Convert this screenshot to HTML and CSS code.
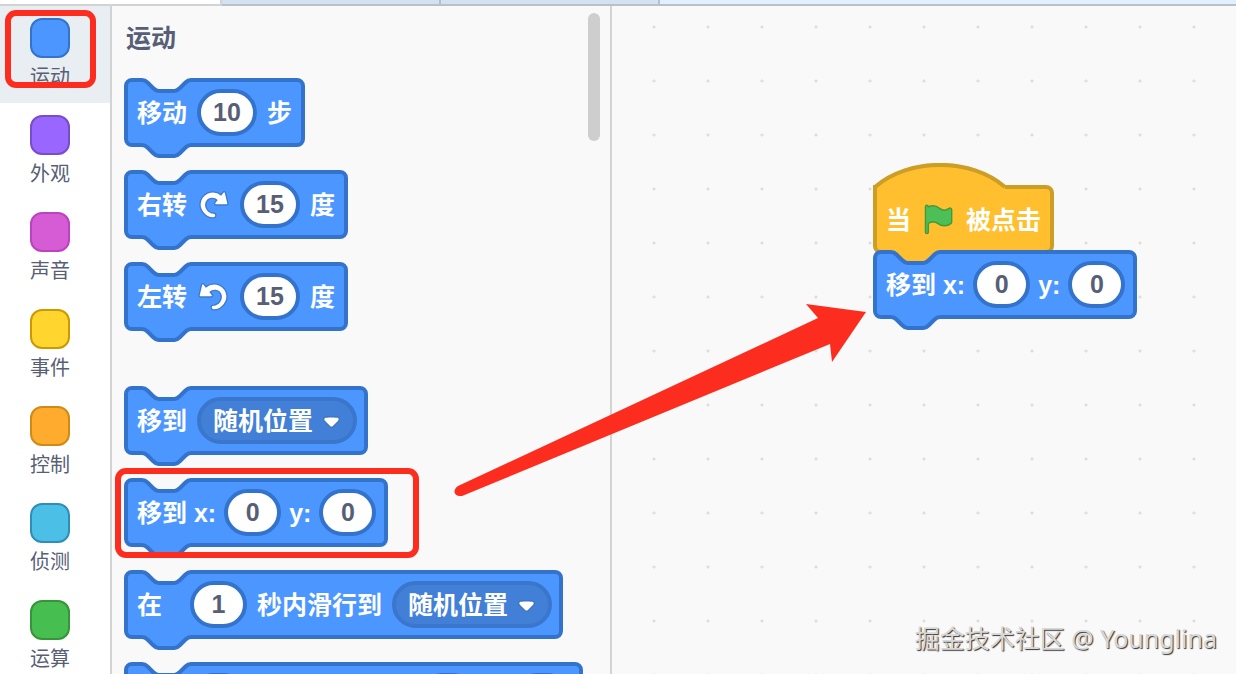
FILE: index.html
```html
<!DOCTYPE html>
<html lang="zh-CN">
<head>
    <meta charset="UTF-8">
    <meta name="viewport" content="width=device-width, initial-scale=1.0">
    <title>Scratch</title>
    <link rel="stylesheet" href="styles.css">
</head>
<body>
    <!-- shared shapes -->
    <svg class="defs" width="0" height="0" aria-hidden="true">
        <symbol id="notch" viewBox="0 0 53 15">
            <path class="notch-fill" d="M0 2h2c3 0 4 1 5.500 2.500l5.500 5.500c1.500 1.500 3 3 5.500 3h16c2.500 0 4-1.500 5.500-3l5.500-5.500c1.500-1.500 2.500-2.500 5.500-2.500h2V0H0z"/>
            <path class="notch-line" d="M0 2h2c3 0 4 1 5.500 2.500l5.500 5.500c1.500 1.500 3 3 5.500 3h16c2.500 0 4-1.500 5.500-3l5.500-5.500c1.500-1.500 2.500-2.500 5.500-2.500h2"/>
        </symbol>
        <symbol id="turn" viewBox="0 0 24 24">
            <path fill="#3d79cc" d="M22.68,12.2a1.6,1.6,0,0,1-1.27.63H13.72a1.59,1.59,0,0,1-1.16-2.58l1.12-1.41a4.82,4.82,0,0,0-3.14-.77,4.31,4.31,0,0,0-2,.8,4.25,4.25,0,0,0-1.34,1.73,5.06,5.06,0,0,0,.54,4.62A5.58,5.58,0,0,0,12,17.74h0a2.26,2.26,0,0,1-.16,4.52A10.25,10.25,0,0,1,3.74,18,10.14,10.14,0,0,1,2.25,8.78,9.7,9.7,0,0,1,5.08,4.64,9.92,9.92,0,0,1,9.66,2.5a10.66,10.66,0,0,1,7.72,1.68l1.08-1.35a1.57,1.57,0,0,1,1.24-.6,1.6,1.6,0,0,1,1.54,1.21l1.7,7.37A1.57,1.57,0,0,1,22.68,12.2Z"/>
            <path fill="#fff" d="M21.38,11.83H13.77a.59.59,0,0,1-.43-1l1.75-2.19a5.9,5.9,0,0,0-4.7-1.58,5.07,5.07,0,0,0-4.11,3.17A6,6,0,0,0,7,15.77a6.51,6.51,0,0,0,5,2.92,1.31,1.31,0,0,1-.08,2.62,9.3,9.3,0,0,1-7.35-3.82A9.16,9.16,0,0,1,3.17,9.12,8.51,8.51,0,0,1,5.71,5.4,8.76,8.76,0,0,1,9.82,3.48a9.71,9.71,0,0,1,7.75,2.07l1.67-2.1a.59.59,0,0,1,1,.21L22,11.08A.59.59,0,0,1,21.38,11.83Z"/>
        </symbol>
        <symbol id="arrow" viewBox="0 0 12.71 8.79">
            <path fill="#231f20" opacity=".1" d="M12.71 2.44A2.41 2.41 0 0 1 12 4.16L8.08 8.08a2.45 2.45 0 0 1-3.45 0L.72 4.16A2.42 2.42 0 0 1 0 2.44 2.48 2.48 0 0 1 .71.71C1 .47 1.43 0 6.36 0S11.75.46 12 .71a2.44 2.44 0 0 1 .71 1.73z"/>
            <path fill="#fff" d="M6.36 7.79a1.43 1.43 0 0 1-1-.42L1.42 3.45a1.44 1.44 0 0 1 0-2c.56-.56 9.31-.56 9.87 0a1.44 1.44 0 0 1 0 2L7.37 7.37a1.43 1.43 0 0 1-1.01.42z"/>
        </symbol>
    </svg>

    <div class="tabs">
        <div class="tab active"></div>
        <div class="tab"></div>
        <div class="tab"></div>
    </div>

    <main class="editor">
        <nav class="categories">
            <button type="button" class="category selected"><span class="bubble motion"></span>运动<span class="mark"></span></button>
            <button type="button" class="category"><span class="bubble looks"></span>外观</button>
            <button type="button" class="category"><span class="bubble sound"></span>声音</button>
            <button type="button" class="category"><span class="bubble events"></span>事件</button>
            <button type="button" class="category"><span class="bubble control"></span>控制</button>
            <button type="button" class="category"><span class="bubble sensing"></span>侦测</button>
            <button type="button" class="category"><span class="bubble operators"></span>运算</button>
        </nav>

        <section class="palette">
            <h2>运动</h2>
            <div class="block">
                <svg class="notch"><use href="#notch"/></svg>
                <span>移动</span>
                <input class="long" type="text" value="10" aria-label="步数">
                <span>步</span>
                <svg class="tail"><use href="#notch"/></svg>
            </div>
            <div class="block">
                <svg class="notch"><use href="#notch"/></svg>
                <span>右转</span>
                <svg class="icon"><use href="#turn"/></svg>
                <input class="long" type="text" value="15" aria-label="右转度数">
                <span>度</span>
                <svg class="tail"><use href="#notch"/></svg>
            </div>
            <div class="block group-end">
                <svg class="notch"><use href="#notch"/></svg>
                <span>左转</span>
                <svg class="icon flip"><use href="#turn"/></svg>
                <input class="long" type="text" value="15" aria-label="左转度数">
                <span>度</span>
                <svg class="tail"><use href="#notch"/></svg>
            </div>
            <div class="block ends-menu">
                <svg class="notch"><use href="#notch"/></svg>
                <span>移到</span>
                <span class="dropdown">
                    <select aria-label="移到"><option>随机位置</option></select>
                    <svg><use href="#arrow"/></svg>
                </span>
                <svg class="tail"><use href="#notch"/></svg>
            </div>
            <div class="block ends-field">
                <svg class="notch"><use href="#notch"/></svg>
                <span>移到 x:</span>
                <input type="text" value="0" aria-label="x">
                <span>y:</span>
                <input type="text" value="0" aria-label="y">
                <svg class="tail"><use href="#notch"/></svg>
                <span class="mark"></span>
            </div>
            <div class="block ends-menu">
                <svg class="notch"><use href="#notch"/></svg>
                <span class="first-word">在</span>
                <input type="text" value="1" aria-label="秒">
                <span>秒内滑行到</span>
                <span class="dropdown">
                    <select aria-label="滑行到"><option>随机位置</option></select>
                    <svg><use href="#arrow"/></svg>
                </span>
                <svg class="tail"><use href="#notch"/></svg>
            </div>
            <!-- below the fold, only the top edge shows -->
            <div class="block ends-field">
                <svg class="notch"><use href="#notch"/></svg>
                <span class="gap-first"></span>
                <input type="text" aria-label="秒">
                <span class="gap-words"></span>
                <input type="text" aria-label="滑行 x">
                <span class="gap-y"></span>
                <input type="text" aria-label="滑行 y">
            </div>
            <div class="scrollbar"></div>
        </section>

        <section class="workspace">
            <div class="stack">
                <div class="block hat">
                    <svg class="dome" viewBox="0 0 134 28">
                        <path class="notch-fill" d="M2 24c34-29.500 96-29.500 130 0v4H4z"/>
                        <path class="notch-line" d="M2 28v-4c34-29.500 96-29.500 130 0"/>
                    </svg>
                    <span>当</span>
                    <svg class="icon" viewBox="0 0 24 24">
                        <path fill="#4cbf56" stroke="#45993d" stroke-linejoin="round" d="M20.8 3.7c-.4-.2-.9-.1-1.200.2-2 1.600-4.800 1.600-6.800 0-2.300-1.900-5.600-2.300-8.300-1v-.4c0-.6-.5-1-1-1s-1 .4-1 1v18.800c0 .5.5 1 1 1h.1c.5 0 1-.5 1-1v-6.400c1-.7 2.100-1.200 3.400-1.300 1.200 0 2.400.4 3.400 1.200 2.900 2.300 7 2.300 9.800 0 .3-.2.4-.5.4-.9V4.700c0-.5-.3-.9-.8-1z"/>
                    </svg>
                    <span>被点击</span>
                </div>
                <div class="block ends-field attached">
                    <svg class="notch"><use href="#notch"/></svg>
                    <span>移到 x:</span>
                    <input type="text" value="0" aria-label="脚本 x">
                    <span>y:</span>
                    <input type="text" value="0" aria-label="脚本 y">
                    <svg class="tail"><use href="#notch"/></svg>
                </div>
            </div>
            <p class="credit">掘金技术社区 @ Younglina</p>
        </section>

        <svg class="pointer" viewBox="0 0 412 194" aria-hidden="true">
            <path fill="#fc2c1f" d="M412 9L352 1l12 14L4 183c-6 4-4 11 4 10L376 41l2 18z"/>
        </svg>
    </main>
</body>
</html>
```

FILE: styles.css
```css
* {
    box-sizing: border-box;
}

body {
    margin: 0;
    height: 100vh;
    display: flex;
    flex-direction: column;
    overflow: hidden;
    background: #f9f9f9;
    color: #575e75;
    font-family: "Liberation Sans", "Noto Sans CJK SC", sans-serif;
}

.defs {
    position: absolute;
}

/* tabs */
.tabs {
    display: flex;
    flex: none;
    height: 6px;
    background: #e0f1fd;
    border-bottom: 2px solid #b9bfcd;
}

.tab {
    width: 219px;
    background: #d2e3ef;
    border-right: 2px solid #b9bfcd;
}

.tab.active {
    width: 222px;
    height: 6px;
    background: #fff;
    border-bottom: 2px solid #d3d3d3;
    border-right-color: #d3d3d3;
}

.editor {
    position: relative;
    display: flex;
    flex: 1;
    min-height: 0;
}

/* category menu */
.categories {
    flex: none;
    width: 112px;
    background: #fff;
    border-right: 2px solid #d3d3d3;
}

.category {
    position: relative;
    display: flex;
    flex-direction: column;
    align-items: center;
    gap: 4px;
    width: 100%;
    height: 97px;
    padding: 12px 10px 0 0;
    border: none;
    background: none;
    color: #575e75;
    font: 20px/28px "Noto Sans CJK SC", sans-serif;
}

.category.selected {
    background: #e9eef2;
}

.bubble {
    width: 40px;
    height: 40px;
    border: 2px solid;
    border-radius: 12px;
}

.motion { background: #4c97ff; border-color: #3373cc; }
.looks { background: #9966ff; border-color: #774dcb; }
.sound { background: #d65cd6; border-color: #bd42bd; }
.events { background: #ffd52e; border-color: #cc9900; }
.control { background: #ffab2e; border-color: #cf8b17; }
.sensing { background: #4cbfe6; border-color: #2e8eb8; }
.operators { background: #46bf50; border-color: #389438; }

/* block list */
.palette {
    position: relative;
    display: flex;
    flex-direction: column;
    align-items: flex-start;
    gap: 23px;
    flex: none;
    width: 500px;
    padding: 14px 12px 0;
    border-right: 2px solid #d3d3d3;
    overflow: hidden;
}

.palette h2 {
    margin: 0 2px;
    height: 35px;
    font-size: 25px;
    line-height: 36px;
}

.scrollbar {
    position: absolute;
    top: 7px;
    right: 10px;
    width: 12px;
    height: 128px;
    border-radius: 6px;
    background: #cecece;
}

/* blocks */
.block {
    --fill: #4c97ff;
    --line: #3373cc;
    --behind: #f9f9f9;
    position: relative;
    display: flex;
    flex: none;
    align-items: center;
    gap: 10px;
    width: max-content;
    height: 69px;
    padding: 0 9px;
    border: 4px solid var(--line);
    border-radius: 8px;
    background: var(--fill);
    color: #fff;
    font-size: 25px;
    font-weight: bold;
    line-height: 36px;
}

.block.ends-field {
    gap: 8px;
    padding-right: 8px;
}

.block.ends-menu {
    padding-right: 7px;
}

.block.group-end {
    margin-bottom: 32px;
}

.notch,
.tail {
    position: absolute;
    left: 12px;
    width: 53px;
    height: 15px;
    fill: var(--behind);
}

.notch {
    top: -4px;
}

.tail {
    top: 61px;
    fill: var(--fill);
}

.notch-line {
    fill: none;
    stroke: var(--line);
    stroke-width: 4px;
}

.first-word {
    margin-right: 18px;
}

.gap-first {
    width: 45px;
}

.gap-words {
    width: 156px;
}

.gap-y {
    width: 22px;
}

.block input {
    width: 57px;
    height: 47px;
    padding: 0;
    border: 4px solid var(--line);
    border-radius: 24px;
    background: #fff;
    color: #575e75;
    font: inherit;
    text-align: center;
}

.block input.long {
    width: 60px;
}

.icon {
    width: 33px;
    height: 33px;
}

.flip {
    transform: scaleX(-1);
}

.dropdown {
    position: relative;
    height: 47px;
}

.dropdown select {
    appearance: none;
    width: 160px;
    height: 47px;
    padding: 0 12px;
    border: 4px solid #3a77cc;
    border-radius: 24px;
    background: #4280d7;
    color: #fff;
    font: inherit;
}

.dropdown svg {
    position: absolute;
    top: 19px;
    right: 17px;
    width: 17px;
    height: 12px;
    pointer-events: none;
}

/* script area */
.workspace {
    position: relative;
    flex: 1;
    background-image: radial-gradient(circle, #dedede 1px, transparent 2px);
    background-size: 54px 54px;
    background-position: 15px -6px;
}

.stack {
    position: absolute;
    top: 179px;
    left: 261px;
}

.block.hat {
    --fill: #ffbf2e;
    --line: #cc9e25;
    gap: 11px;
    border-top-left-radius: 0;
}

.dome {
    position: absolute;
    top: -26px;
    left: -4px;
    width: 134px;
    height: 28px;
}

.dome .notch-fill {
    fill: var(--fill);
}

.block.attached {
    --behind: #ffbf2e;
    margin-top: -4px;
}

.credit {
    position: absolute;
    right: 19px;
    bottom: 18px;
    margin: 0;
    color: #d8d8d8;
    font: 25px/36px "Noto Sans", "Noto Sans CJK SC", sans-serif;
    text-shadow: 1px 1px 1px #333;
}

/* red annotations */
.mark {
    position: absolute;
    border: 6px solid #fc2c1f;
    border-radius: 11px;
}

.category .mark {
    top: 4px;
    left: 5px;
    width: 91px;
    height: 78px;
}

.block .mark {
    top: -14px;
    left: -13px;
    width: 304px;
    height: 90px;
}

.pointer {
    position: absolute;
    top: 297px;
    left: 454px;
    width: 412px;
    height: 194px;
}
```
